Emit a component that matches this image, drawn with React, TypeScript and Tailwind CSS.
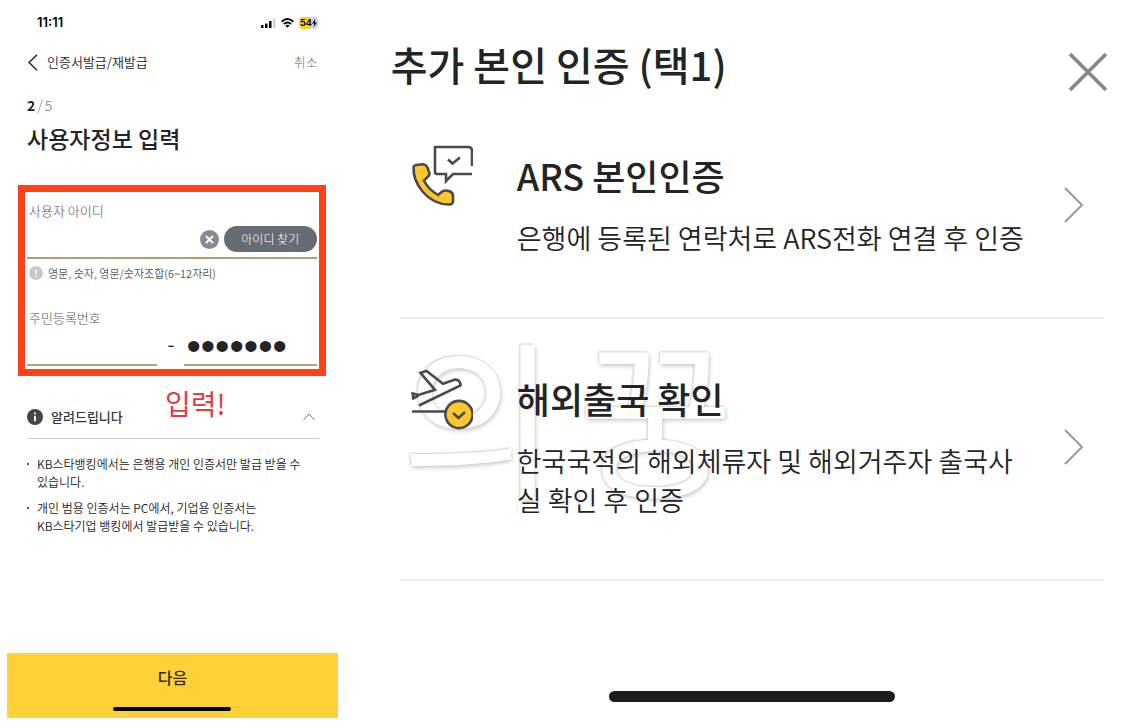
import type { ReactNode } from "react";

const CallIcon = () => (
  <svg className="h-16 w-16 shrink-0" viewBox="0 0 64 64" fill="none" stroke="#4a4a4c" strokeWidth="2.6" aria-hidden="true">
    <path d="M63 22V7Q63 3 59 3H26V28Q26 30 28 30H37V37L44 30H63" />
    <path d="M39 15.5L43.5 19.5L51 13.5" />
    <path
      fill="#fdc82f"
      d="M4.5 23Q5 21 9 20.7L14 20.3Q17.5 20.5 19 25L20.5 29.5Q20.7 31 19.5 32L15 36.5Q19 45 29 51L33.5 47.3Q36 45.8 40.5 47.3Q43.5 48.5 44 51V57.5Q43.8 60 41 60.5Q25 61 13.5 47.5Q4 36 4.5 23Z"
    />
  </svg>
);

const DepartureIcon = () => (
  <svg className="h-16 w-16 shrink-0" viewBox="0 0 64 64" fill="none" stroke="#4a4a4c" strokeWidth="2.6" aria-hidden="true">
    <path d="M4.5 32L3.7 26.5L9.5 28L26 22.8L11.5 5.8L17.5 4L34 16.8L46 12.6Q51.5 12.5 51.5 18.5L10 38.5" />
    <path d="M3 32L9.5 28.5" />
    <path d="M3 44.5H36" />
    <circle cx="50" cy="47.5" r="13.6" fill="#fdc82f" />
    <path d="M44 46L49.5 51L56 45" />
  </svg>
);

const ChevronRight = () => (
  <svg className="mt-2 h-9 w-5 shrink-0" viewBox="0 0 20 36" fill="none" stroke="#97999b" strokeWidth="2" aria-hidden="true">
    <path d="M1 1L18 18L1 35" />
  </svg>
);

interface AuthOptionProps {
  icon: ReactNode;
  title: string;
  children: ReactNode;
}

const AuthOption = ({ icon, title, children }: AuthOptionProps) => (
  <li className="border-b-2 border-[#ececec]">
    <button type="button" className="flex w-full items-start pt-12 pr-5 pb-[60px] pl-2 text-left">
      {icon}
      <span className="flex grow items-center justify-between">
        <span className="block pt-1 pl-11">
          <span className="block text-[36px] leading-[54px] font-medium text-[#222426]">{title}</span>
          <span className="mt-4 block text-[27px] leading-[39px] font-[350] text-[#222426]">{children}</span>
        </span>
        <ChevronRight />
      </span>
    </button>
  </li>
);

const StatusBar = () => (
  <div className="flex h-[22px] items-center justify-between pl-[10px]">
    <span className="font-[Inter] text-[13px] font-semibold text-black">11:11</span>
    <div className="flex items-center gap-[5px]">
      <svg className="h-[9px] w-[15px]" viewBox="0 0 15 9" aria-hidden="true">
        <rect x="0" y="6" width="2.5" height="3" rx=".6" />
        <rect x="4" y="4.5" width="2.5" height="4.5" rx=".6" />
        <rect x="8" y="2" width="2.5" height="7" rx=".6" />
        <rect x="12" y="0" width="2.5" height="9" rx=".6" fill="#d0d0d0" />
      </svg>
      <svg className="h-[10px] w-[13px]" viewBox="0 0 13 10" fill="none" stroke="#000" strokeWidth="1.9" aria-hidden="true">
        <path d="M.7 3.7Q6.5-1.5 12.3 3.7" />
        <path d="M2.9 6Q6.5 2.9 10.1 6" />
        <path d="M6.5 9.8L4.4 7.6Q6.5 6 8.6 7.6Z" fill="#000" stroke="none" />
      </svg>
      <span className="flex h-3 items-center rounded bg-linear-to-r from-[#fbd21c] from-55% to-[#d2d2d2] to-55% px-px font-[Inter] text-[9px] font-bold text-black">
        54
        <svg className="h-2 w-[5px]" viewBox="0 0 5 8" aria-hidden="true">
          <path d="M3.2 0L0 4.5H2.2L1.6 8L5 3.4H2.8Z" />
        </svg>
      </span>
    </div>
  </div>
);

const UserInfoScreen = () => (
  <section className="flex flex-col pt-3 pr-[15px] pb-[10px] pl-[7px]">
    <div className="pr-5 pl-5">
      <StatusBar />

      <header className="mt-[18px] flex h-5 items-center justify-between text-[13px]">
        <button type="button" className="flex items-center gap-2 font-[350] text-[#222426]">
          <svg className="h-[17px] w-3" viewBox="0 0 12 17" fill="none" stroke="#222426" strokeWidth="1.4" aria-hidden="true">
            <path d="M10 .8L2 8.5L10 16.2" />
          </svg>
          인증서발급/재발급
        </button>
        <button type="button" className="font-light text-[#6f7275]">취소</button>
      </header>

      <p className="mt-[23px] flex gap-0.5 text-[14px] leading-5 font-light text-[#76797c]">
        <strong className="font-bold text-[#222426]">2</strong>
        <span>/</span>
        <span>5</span>
      </p>
      <h1 className="mt-2 text-[23px] leading-[30px] font-medium text-[#222426]">사용자정보 입력</h1>
    </div>

    <form className="mt-8 mr-3 ml-[11px] border-[7px] border-[#ff4019] px-0.5 pt-[9px] pb-[3px] text-[#54575a]">
      <label htmlFor="user-id" className="block pl-0.5 text-[13px] leading-5 font-light">사용자 아이디</label>
      <div className="flex h-[38px] items-center border-b-2 border-[#b0a078]">
        <input id="user-id" type="text" className="h-7 min-w-0 grow outline-none" />
        <button type="button" aria-label="지우기" className="mr-[5px] shrink-0">
          <svg className="h-[19px] w-[19px]" viewBox="0 0 19 19" aria-hidden="true">
            <circle cx="9.5" cy="9.5" r="9.5" fill="#858b93" />
            <path d="M6 6L13 13M13 6L6 13" stroke="#fff" strokeWidth="2" />
          </svg>
        </button>
        <button type="button" className="h-[26px] w-[93px] shrink-0 rounded-full bg-[#666c73] text-[12px] leading-[26px] font-light text-white">
          아이디 찾기
        </button>
      </div>
      <p className="mt-[5px] flex items-center gap-[5px] pl-0.5 text-[11px] leading-[18px] font-[350]">
        <svg className="h-[14px] w-[14px]" viewBox="0 0 14 14" aria-hidden="true">
          <circle cx="7" cy="7" r="7" fill="#c6cacf" />
          <path d="M7 3.5V8M7 9.5V11" stroke="#fff" strokeWidth="1.4" />
        </svg>
        영문, 숫자, 영문/숫자조합(6~12자리)
      </p>

      <label htmlFor="resident-front" className="mt-[26px] block pl-0.5 text-[13px] leading-5 font-light">주민등록번호</label>
      <div className="flex h-[38px]">
        <input id="resident-front" type="text" className="w-0 min-w-0 flex-1 border-b-2 border-[#b0a078] outline-none" />
        <span className="w-[27px] text-center text-[20px] leading-8 text-[#222426]">-</span>
        <span className="flex flex-1 border-b-2 border-[#b0a078] pl-0.5">
          <input
            type="password"
            aria-label="주민등록번호 뒷자리"
            defaultValue="0000000"
            className="w-full min-w-0 font-['Liberation_Sans'] text-[41px] leading-9 text-[#222426] outline-none"
          />
        </span>
      </div>
    </form>

    <div className="relative mt-[31px] pr-[19px] pl-5">
      <span className="absolute -top-6 left-[158px] text-[28px] leading-10 text-[#e8394a]">입력!</span>
      <button type="button" aria-expanded="true" className="flex h-8 w-full items-start border-b border-[#cfcfcf] text-[13px] leading-5 font-medium text-[#333537]">
        <svg className="mt-0.5 mr-2 h-4 w-4" viewBox="0 0 16 16" aria-hidden="true">
          <circle cx="8" cy="8" r="8" fill="#444648" />
          <path d="M8 3.5V5.2M8 6.8V12.3" stroke="#fff" strokeWidth="1.8" />
        </svg>
        알려드립니다
        <svg className="mt-1.5 mr-1 ml-auto h-2 w-3" viewBox="0 0 12 8" fill="none" stroke="#77797b" aria-hidden="true">
          <path d="M.5 7L6 1L11.5 7" />
        </svg>
      </button>
      <ul className="space-y-2 pt-4 text-[12px] leading-[18px] font-[350] text-[#222426]">
        <li className="flex gap-2">
          <span className="mt-2 h-0.5 w-0.5 shrink-0 bg-[#555759]" />
          <span>KB스타뱅킹에서는 은행용 개인 인증서만 발급 받을 수<br />있습니다.</span>
        </li>
        <li className="flex gap-2">
          <span className="mt-2 h-0.5 w-0.5 shrink-0 bg-[#555759]" />
          <span>개인 범용 인증서는 PC에서, 기업용 인증서는<br />KB스타기업 뱅킹에서 발급받을 수 있습니다.</span>
        </li>
      </ul>
    </div>

    <button type="button" className="mt-auto flex h-[65px] flex-col items-center justify-between bg-[#ffd137] pt-3 pb-[7px] text-[16px] leading-6 font-medium text-[#332c1c]">
      다음
      <span className="h-1 w-[118px] rounded-full bg-black" />
    </button>
  </section>
);

const ExtraAuthScreen = () => (
  <section className="flex flex-col pr-[34px] pb-[26px] pl-12">
    <header className="-ml-[10px] flex h-24 items-center justify-between pt-8">
      <h2 className="text-[40px] leading-[60px] font-medium text-[#222426]">추가 본인 인증 (택1)</h2>
      <button type="button" aria-label="닫기">
        <svg className="mt-4 -mr-1 h-10 w-10" viewBox="0 0 40 40" fill="none" stroke="#85878a" strokeWidth="3.6" aria-hidden="true">
          <path d="M2 2L38 38M38 2L2 38" />
        </svg>
      </button>
    </header>

    <div className="relative">
      {/* Embossed watermark */}
      <div
        aria-hidden="true"
        className="pointer-events-none absolute top-[186px] left-0 flex gap-5 text-[170px] leading-[260px] text-white select-none [text-shadow:1px_2px_4px_#c8c8c8,-1px_-1px_2px_#d4d4d4]"
      >
        <span>의</span>
        <span>꿍</span>
      </div>
      <ul className="relative">
        <AuthOption icon={<CallIcon />} title="ARS 본인인증">
          은행에 등록된 연락처로 ARS전화 연결 후 인증
        </AuthOption>
        <AuthOption icon={<DepartureIcon />} title="해외출국 확인">
          한국국적의 해외체류자 및 해외거주자 출국사<br />실 확인 후 인증
        </AuthOption>
      </ul>
    </div>

    <div className="mx-auto mt-auto h-[11px] w-[286px] rounded-full bg-[#1c1c1c]" />
  </section>
);

export default function App() {
  return (
    <main className="grid min-h-screen grid-cols-[minmax(0,31fr)_minmax(0,69fr)] bg-white font-['Noto_Sans_CJK_KR',sans-serif]">
      <UserInfoScreen />
      <ExtraAuthScreen />
    </main>
  );
}
